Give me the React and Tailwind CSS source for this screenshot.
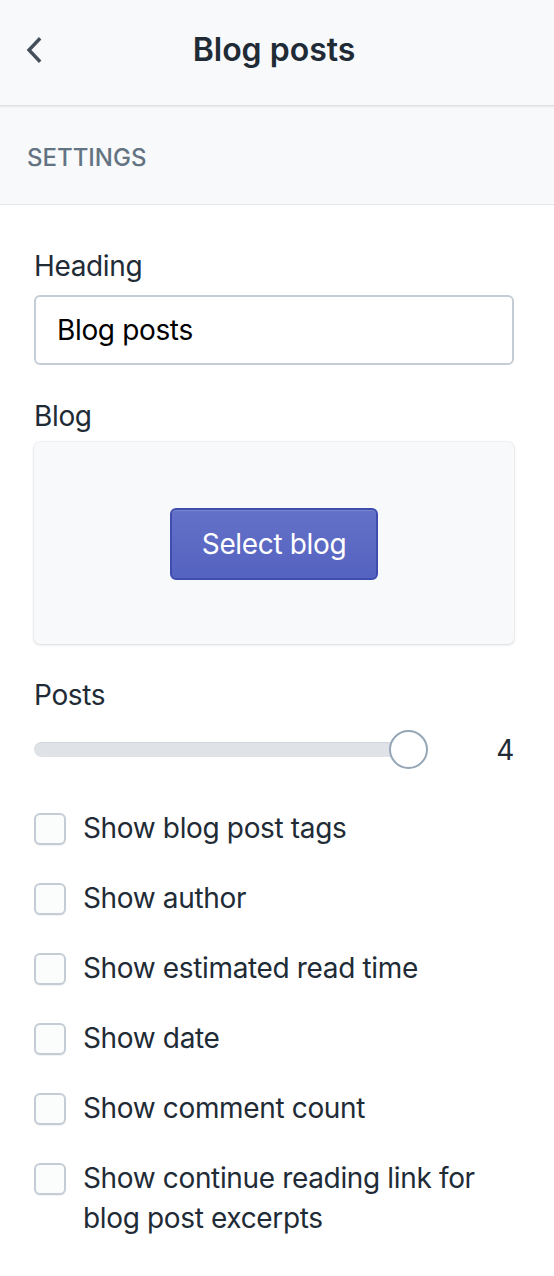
import React from 'react';

const OPTIONS = [
  'Show blog post tags',
  'Show author',
  'Show estimated read time',
  'Show date',
  'Show comment count',
  'Show continue reading link for blog post excerpts',
];

const Checkbox = ({ label }) => (
  <label className="flex items-start gap-[17px]">
    <span className="mt-[5px] h-[32px] w-[32px] shrink-0 rounded-[6px] border-2 border-[#c4cdd5] bg-[#fbfcfc] shadow-[0_1px_1px_rgba(0,0,0,0.06)]"></span>
    <span className="text-[28px] leading-[40px] tracking-[-0.35px] text-[#212b36]">{label}</span>
  </label>
);

export default function App() {
  return (
    <div className="min-h-[1276px] w-[554px] bg-white" style={{ fontFamily: 'Inter, "Liberation Sans", sans-serif' }}>
      {/* Top bar */}
      <header className="relative flex h-[106px] items-center justify-center border-b border-[#dcdfe4] bg-[#f8f9fb] pb-[6px] pr-[6px] shadow-[0_1px_2px_rgba(0,0,0,0.08)]">
        <button className="absolute left-[24px] top-[34px] flex h-[32px] w-[20px] items-center justify-center text-[#454f5b]">
          <svg width="16" height="26" viewBox="0 0 16 26" fill="none">
            <path d="M13 2.5 L3 13 L13 23.5" stroke="currentColor" strokeWidth="3.4" strokeLinecap="square" />
          </svg>
        </button>
        <h1 className="text-[32px] font-semibold leading-[40px] text-[#212b36]">Blog posts</h1>
      </header>

      {/* Section title */}
      <div className="flex h-[99px] items-center border-b border-[#e3e6ea] bg-[#f8f9fb] pl-[27px] pt-[5px]">
        <span className="text-[24px] font-medium uppercase text-[#637381]">Settings</span>
      </div>

      {/* Fields */}
      <div className="pl-[34px] pr-[40px] pt-[41px] tracking-[-0.35px]">
        <label className="block text-[28px] leading-[40px] text-[#212b36]">Heading</label>
        <div className="mt-[9px] flex h-[70px] items-center rounded-[6px] border-2 border-[#c4cdd5] bg-white pl-[21px]">
          <span className="text-[28px] text-black">Blog posts</span>
        </div>

        <label className="mt-[31px] block text-[28px] leading-[40px] text-[#212b36]">Blog</label>
        <div className="mt-[6px] flex h-[202px] items-center justify-center rounded-[6px] bg-[#f8f9fb] shadow-[0_0_0_1px_rgba(63,63,68,0.05),0_1px_3px_rgba(63,63,68,0.15)]">
          <button className="mt-[2px] flex h-[72px] w-[208px] items-center justify-center rounded-[6px] border-2 border-[#3f4eae] bg-gradient-to-b from-[#6371c7] to-[#5563c1] text-[28px] text-white shadow-[inset_0_1px_0_rgba(255,255,255,0.15)]">
            Select blog
          </button>
        </div>

        <label className="mt-[31px] block text-[28px] leading-[40px] text-[#212b36]">Posts</label>
        <div className="mt-[15px] flex h-[39px] items-center">
          <div className="relative flex h-[39px] w-[394px] items-center">
            <div className="h-[15px] w-[374px] rounded-full bg-[#dfe3e8] shadow-[inset_0_1px_1px_rgba(0,0,0,0.06)]"></div>
            <div className="absolute right-0 top-0 h-[39px] w-[39px] rounded-full border-2 border-[#95a7b7] bg-white"></div>
          </div>
          <span className="ml-auto text-[28px] leading-[40px] text-[#212b36]">4</span>
        </div>

        <div className="mt-[39px] flex flex-col gap-[30px] pb-[40px]">
          {OPTIONS.map((o) => (
            <Checkbox key={o} label={o} />
          ))}
        </div>
      </div>
    </div>
  );
}
